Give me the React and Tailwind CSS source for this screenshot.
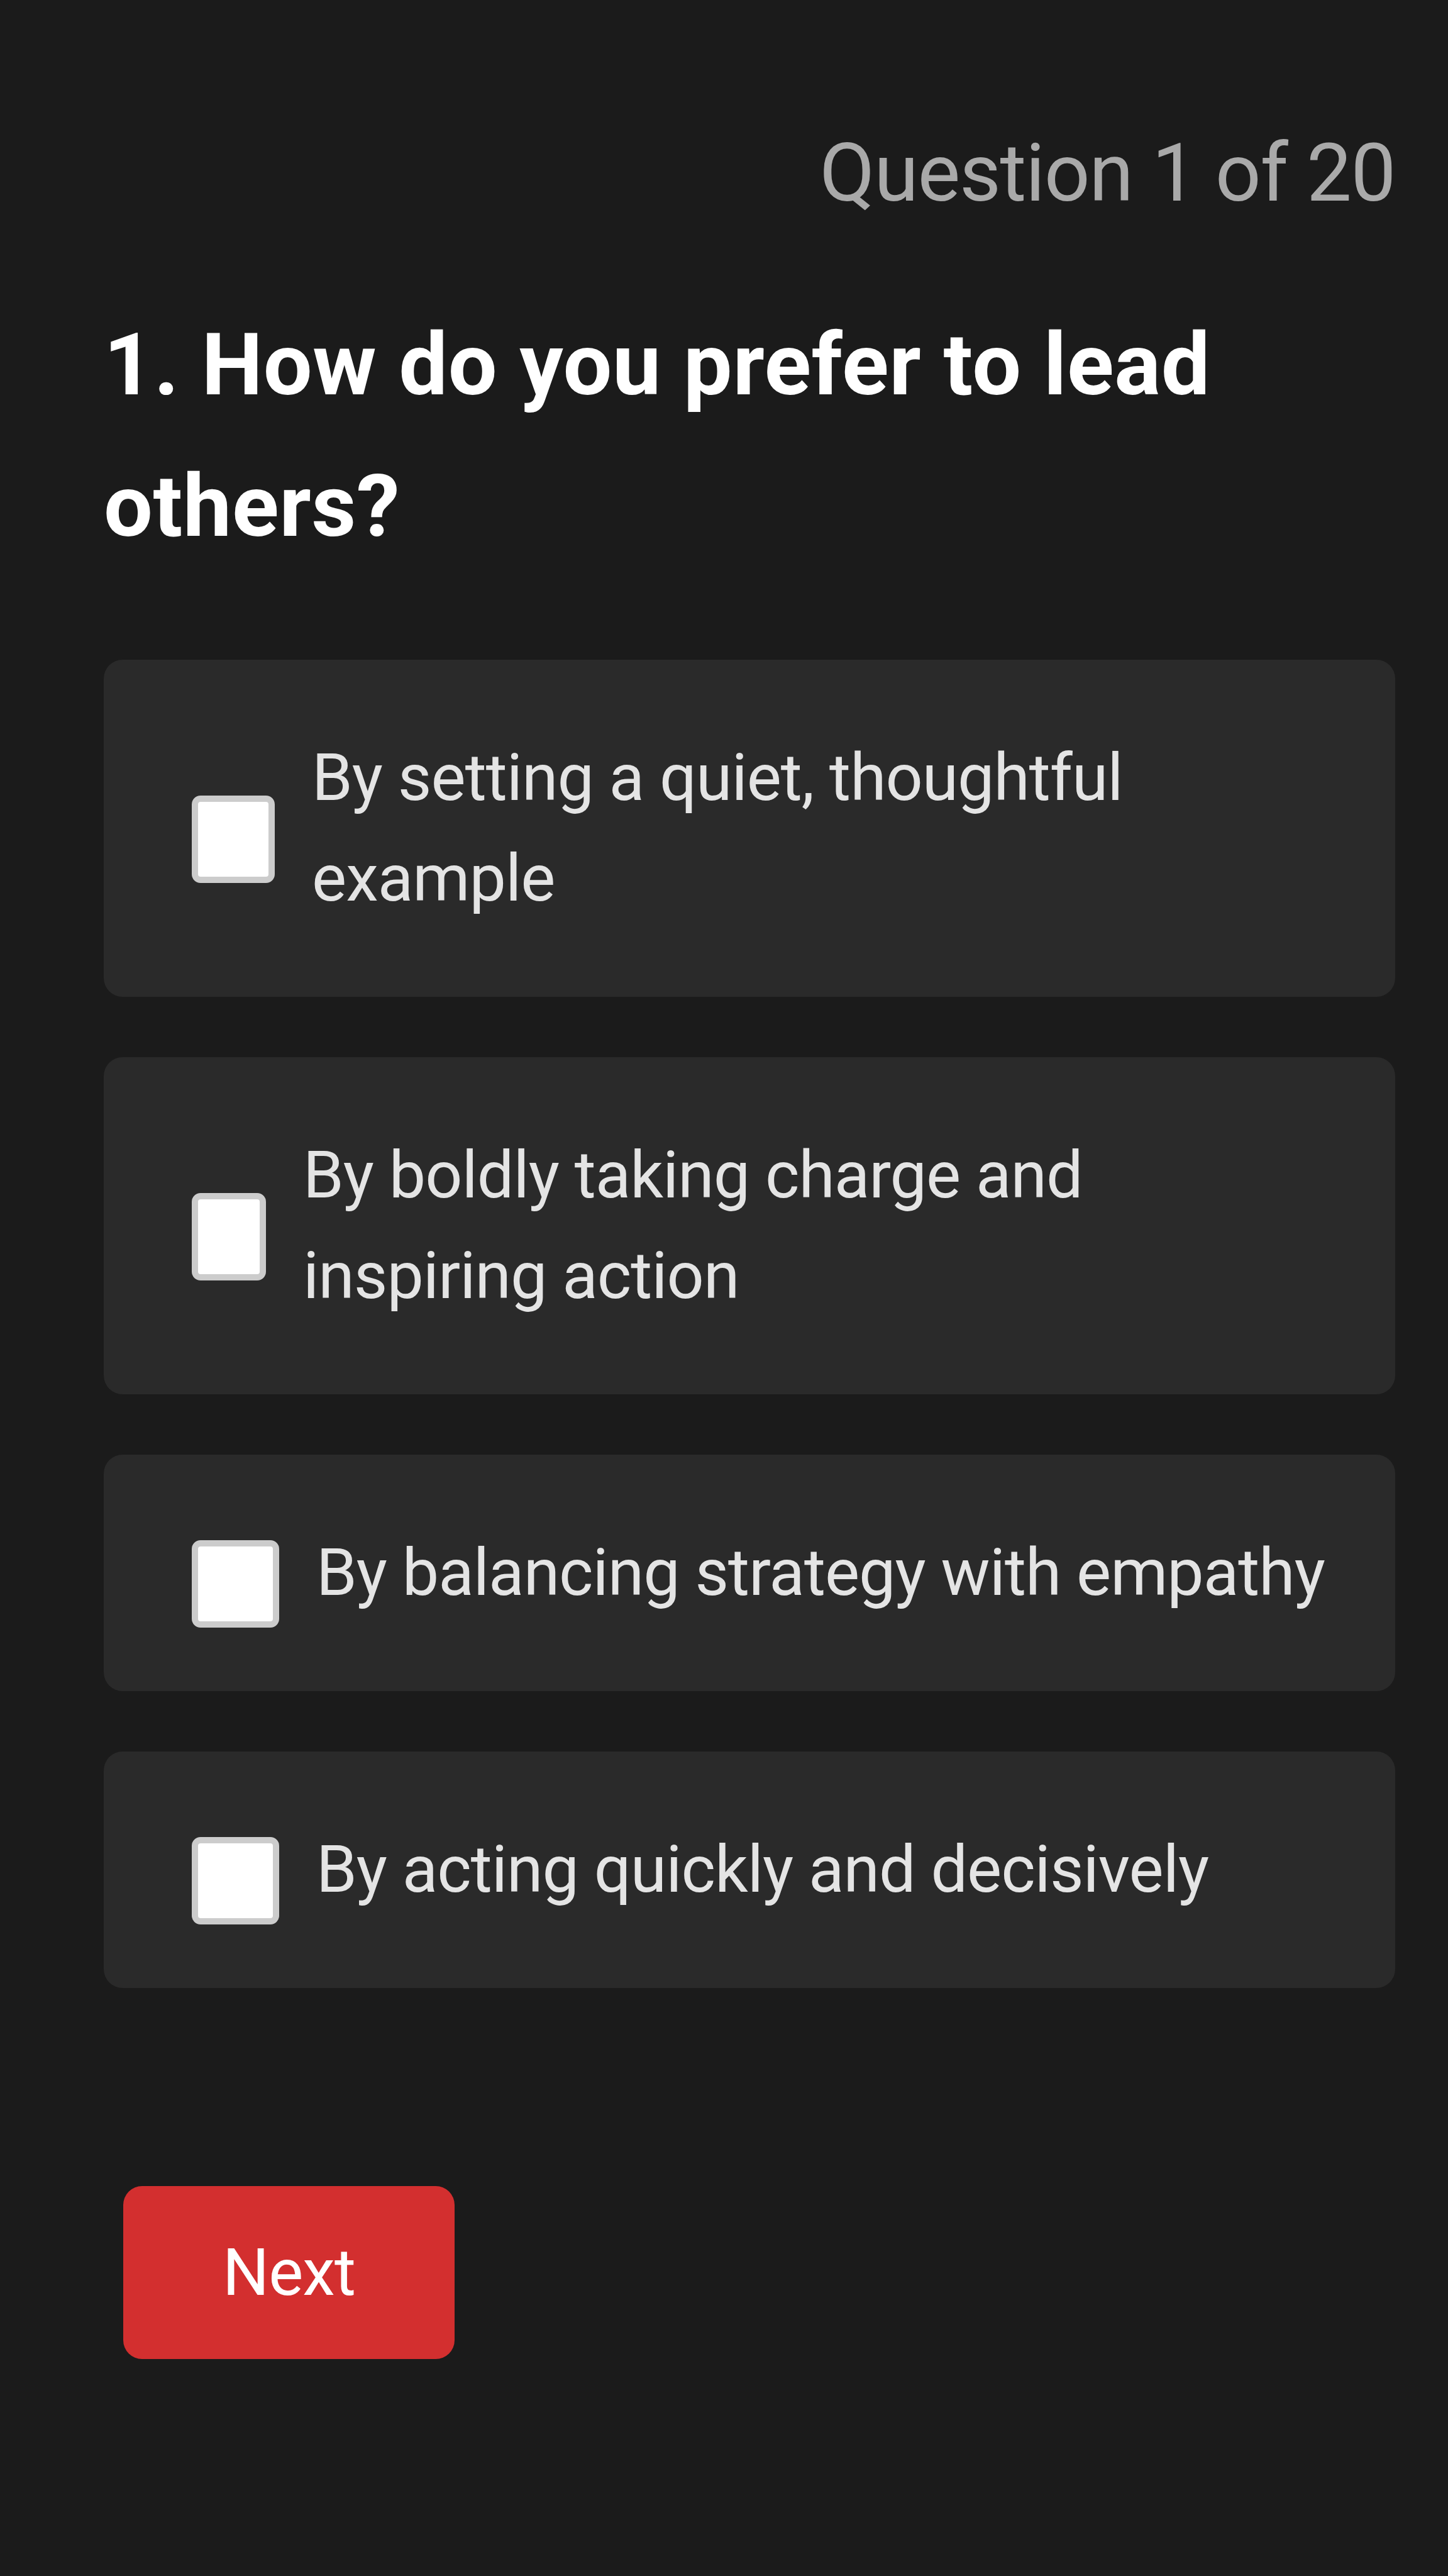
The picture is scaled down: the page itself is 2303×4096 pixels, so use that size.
import { useState } from 'react';

const options = [
  { id: 'quiet', label: 'By setting a quiet, thoughtful example', box: 'w-[132px]' },
  { id: 'bold', label: 'By boldly taking charge and inspiring action', box: 'w-[118px]' },
  { id: 'balance', label: 'By balancing strategy with empathy', box: 'w-[139px]' },
  { id: 'quick', label: 'By acting quickly and decisively', box: 'w-[139px]' },
];

export default function App() {
  const [picked, setPicked] = useState({});
  const toggle = (id) => setPicked((p) => ({ ...p, [id]: !p[id] }));

  return (
    <div className="min-h-screen bg-[#1b1b1b] pl-[165px] pr-[84px] pt-[179px] font-['Roboto',sans-serif]">
      <p className="text-right text-[128px] leading-[192px] tracking-[-1.4px] text-[#a9a9a9]">Question 1 of 20</p>
      <h1 className="mt-[97px] text-[138px] font-bold leading-[225px] tracking-[0.7px] text-white">
        1. How do you prefer to lead others?
      </h1>
      <div className="mt-[131px] flex flex-col gap-[96px]">
        {options.map((o) => (
          <label
            key={o.id}
            className="flex cursor-pointer items-center rounded-[30px] bg-[#2a2a2a] py-[108px] pl-[140px] pr-[104px]"
          >
            <input type="checkbox" className="hidden" checked={!!picked[o.id]} onChange={() => toggle(o.id)} />
            <span
              className={`${o.box} mr-[59px] h-[139px] shrink-0 translate-y-[17px] rounded-[14px] border-[10px] border-[#cccccc] ${picked[o.id] ? 'bg-[#d32f2f]' : 'bg-white'}`}
            />
            <span className="min-w-0 flex-1 text-[104px] leading-[160px] tracking-[-1px] text-[#e4e4e4]">{o.label}</span>
          </label>
        ))}
      </div>
      <button className="ml-[31px] mt-[315px] h-[275px] w-[527px] rounded-[30px] bg-[#d32f2f] text-[104px] tracking-[-1px] text-white">
        Next
      </button>
    </div>
  );
}
